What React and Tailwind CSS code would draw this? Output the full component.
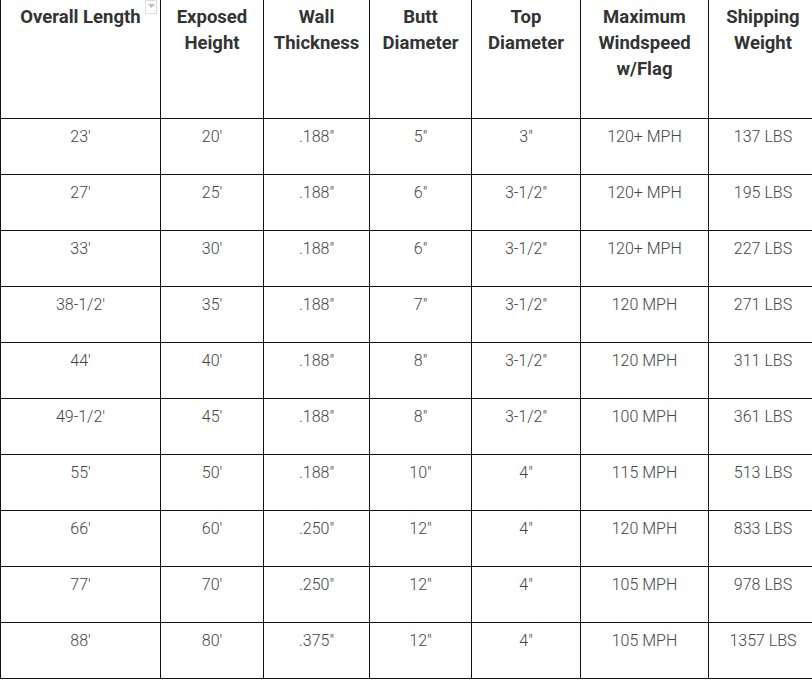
import React from "react";

const headers = [
  "Overall Length",
  "Exposed Height",
  "Wall Thickness",
  "Butt Diameter",
  "Top Diameter",
  "Maximum Windspeed w/Flag",
  "Shipping Weight",
];

const rows = [
  ["23'", "20'", '.188"', '5"', '3"', "120+ MPH", "137 LBS"],
  ["27'", "25'", '.188"', '6"', '3-1/2"', "120+ MPH", "195 LBS"],
  ["33'", "30'", '.188"', '6"', '3-1/2"', "120+ MPH", "227 LBS"],
  ["38-1/2'", "35'", '.188"', '7"', '3-1/2"', "120 MPH", "271 LBS"],
  ["44'", "40'", '.188"', '8"', '3-1/2"', "120 MPH", "311 LBS"],
  ["49-1/2'", "45'", '.188"', '8"', '3-1/2"', "100 MPH", "361 LBS"],
  ["55'", "50'", '.188"', '10"', '4"', "115 MPH", "513 LBS"],
  ["66'", "60'", '.250"', '12"', '4"', "120 MPH", "833 LBS"],
  ["77'", "70'", '.250"', '12"', '4"', "105 MPH", "978 LBS"],
  ["88'", "80'", '.375"', '12"', '4"', "105 MPH", "1357 LBS"],
];

export default function App() {
  return (
    <div className="w-[812px] h-[680px] overflow-hidden bg-white font-['Roboto',sans-serif]">
      <div className="grid w-[818px] grid-cols-[161px_103px_106px_102px_109px_128px_109px]">
        {headers.map((h, i) => (
          <div
            key={h}
            className={`relative h-[119px] border-b border-r border-[#111] px-2 pt-[4px] text-center text-[18.5px] font-bold leading-[26px] text-[#333] ${i === 0 ? "border-l" : ""}`}
          >
            {h}
            {i === 0 && (
              <span className="absolute right-[3px] top-0 flex h-[14px] w-[12px] items-start justify-center border border-[#ddd] bg-white pt-[3px]">
                <svg width="7" height="4" viewBox="0 0 7 4">
                  <path d="M0 0H7L3.5 4Z" fill="#bbb" />
                </svg>
              </span>
            )}
          </div>
        ))}
        {rows.map((r, ri) =>
          r.map((c, ci) => (
            <div
              key={ri + "-" + ci}
              className={`h-[56px] border-b border-r border-[#111] pt-[6px] text-center text-[16px] font-light leading-[24px] text-[#444] ${ci === 0 ? "border-l" : ""}`}
            >
              {c}
            </div>
          ))
        )}
      </div>
    </div>
  );
}
